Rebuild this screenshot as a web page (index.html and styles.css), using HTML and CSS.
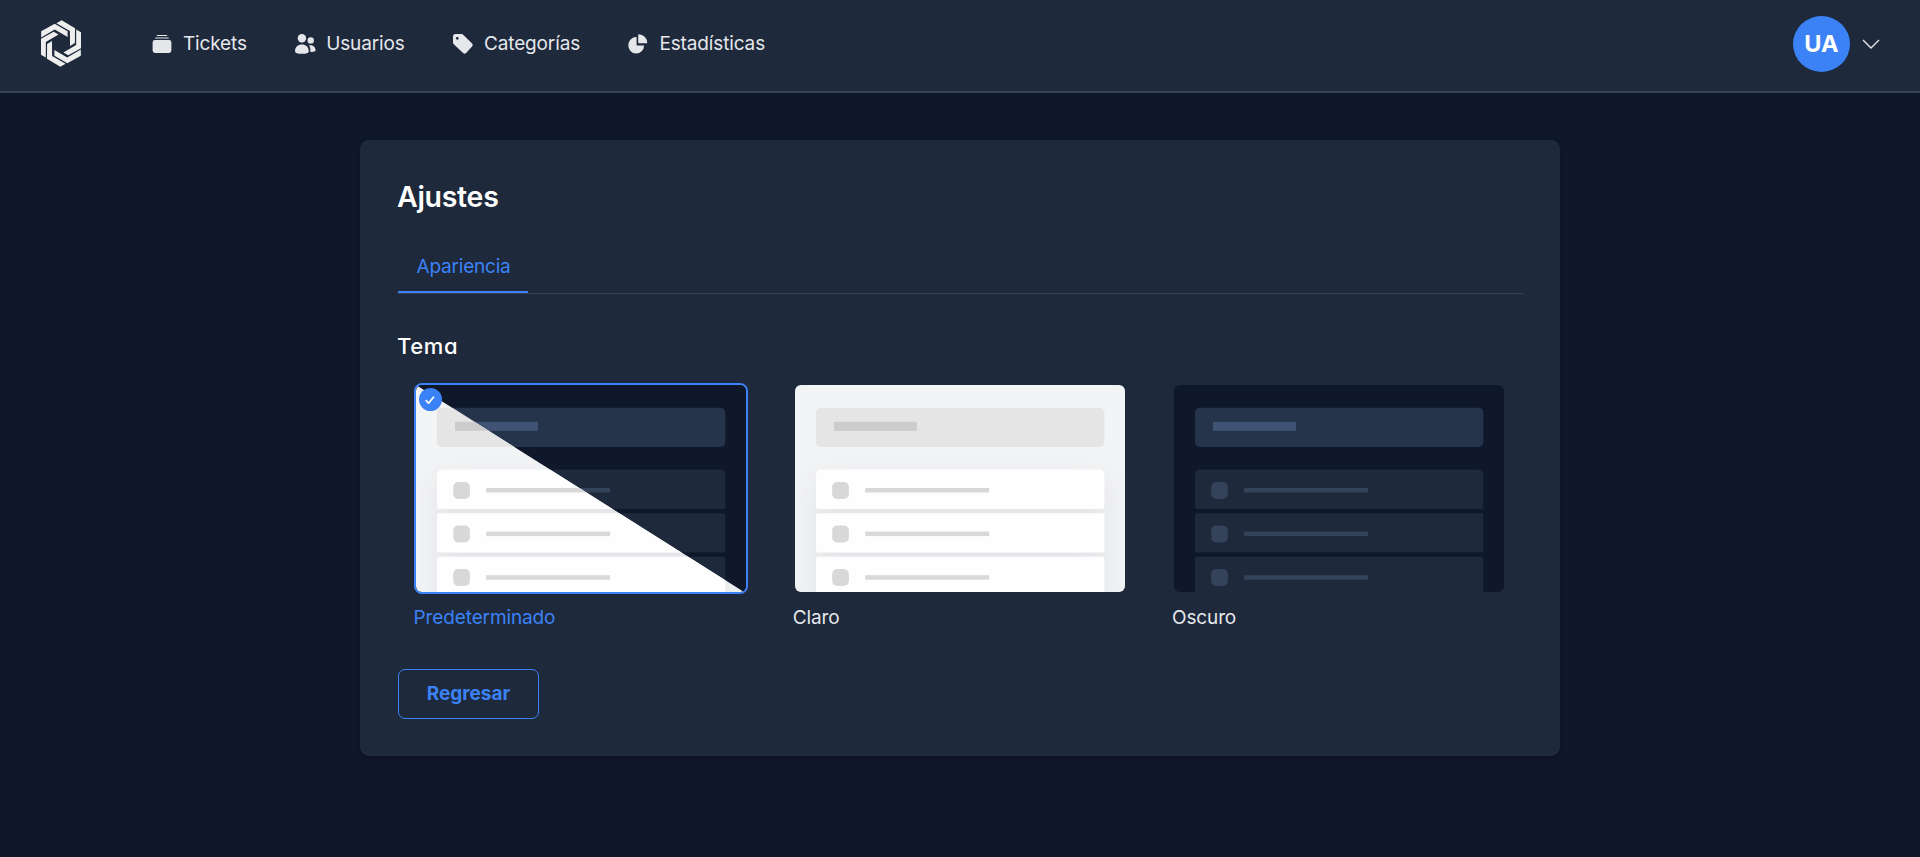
FILE: index.html
```html
<!DOCTYPE html>
<html lang="es">
<head>
<meta charset="utf-8">
<title>Ajustes</title>
<link rel="stylesheet" href="styles.css">
</head>
<body>
<svg class="defs" aria-hidden="true">
  <defs>
    <g id="preview">
      <rect class="p-bg" width="330.1" height="207"/>
      <rect class="p-shadow" x="18" y="92" width="295" height="140"/>
      <rect class="p-head" x="21" y="22.7" width="288.5" height="39.3" rx="5"/>
      <rect class="p-title" x="39" y="36.8" width="83" height="9"/>
      <path class="p-row" d="M26 84.6h278.500a5 5 0 0 1 5 5V122a2 2 0 0 1-2 2H23a2 2 0 0 1-2-2V89.600a5 5 0 0 1 5-5z"/>
      <rect class="p-row" x="21" y="128.300" width="288.500" height="39.300" rx="2"/>
      <rect class="p-row" x="21" y="171.800" width="288.500" height="45" rx="2"/>
      <g class="p-item">
        <rect x="37.200" y="97" width="16.700" height="17" rx="5"/><rect x="70.200" y="103" width="124" height="4.500"/>
        <rect x="37.200" y="140.500" width="16.700" height="17" rx="5"/><rect x="70.200" y="146.600" width="124" height="4.500"/>
        <rect x="37.200" y="184" width="16.700" height="17" rx="5"/><rect x="70.200" y="190.200" width="124" height="4.500"/>
      </g>
    </g>
    <clipPath id="lower"><path d="M0 0L328 207H0z"/></clipPath>
    <filter id="soft" x="-20%" y="-40%" width="140%" height="180%"><feGaussianBlur stdDeviation="14"/></filter>
    <path id="blade" d="M-60-37L-19-60L20-37V-20L-19-42L-60-18.500z"/>
  </defs>
</svg>

<header class="nav">
  <svg class="logo" viewBox="-60.500 -71 121 142">
    <use href="#blade"/><use href="#blade" transform="rotate(60)"/><use href="#blade" transform="rotate(120)"/>
    <use href="#blade" transform="rotate(180)"/><use href="#blade" transform="rotate(240)"/><use href="#blade" transform="rotate(300)"/>
  </svg>
  <nav class="links">
    <a class="link"><svg class="icon" viewBox="0 0 20 20"><path d="M5.500 1h9q.8 0 .9 1H4.600q.1-1 .9-1zM4.300 3.400h11.400q1.300 0 1.500 1.100H2.800q.2-1.100 1.500-1.100zM3 6h14q2.400 0 2.400 2.400v8.200q0 2.400-2.400 2.400H3Q.6 19 .6 16.600V8.400Q.6 6 3 6z"/></svg>Tickets</a>
    <a class="link"><svg class="icon" viewBox="0 0 20 20"><circle cx="6.900" cy="4.200" r="4.200"/><circle cx="15.700" cy="6.400" r="3.200"/><path d="M0 17.200C0 13.300 3 10.600 6.900 10.600s6.900 2.700 6.900 6.600Q13.500 19.800 6.900 19.800T0 17.200zM14 11.300c3.700-.8 6.600 1.500 6.600 5.400q-1.500 1.500-5.300 1.400c.3-2.800 0-4.800-1.300-6.800z"/></svg>Usuarios</a>
    <a class="link"><svg class="icon" viewBox="0 0 20 20"><path fill-rule="evenodd" d="M2.500 0h6q1 0 1.700.7l8.900 8.900q1.400 1.500 0 3l-6 6.300q-1.500 1.500-3 0L.8 10.300Q0 9.500 0 8.500v-6Q0 0 2.500 0zM4.300 2.900a1.400 1.400 0 1 0 0 2.800 1.400 1.400 0 0 0 0-2.800z"/></svg>Categorías</a>
    <a class="link"><svg class="icon" viewBox="0 0 20 20"><path d="M8.600 3.100v7.800q0 .5.500.5h7A7.900 8.200 0 1 1 8.600 3.100zM10.600.2a8.600 8.600 0 0 1 8.600 8.600q0 .5-.5.500h-7.600q-.9 0-.9-.8V.6q0-.4.400-.4z"/></svg>Estadísticas</a>
  </nav>
  <div class="account">
    <span class="avatar">UA</span>
    <svg class="chevron" viewBox="0 0 18 10"><path d="M1 1l8 8 8-8"/></svg>
  </div>
</header>

<main class="card">
  <h1 class="title">Ajustes</h1>
  <div class="tabs"><a class="tab">Apariencia</a></div>
  <h2 class="section">Tema</h2>
  <div class="themes">
    <div class="theme selected">
      <div class="frame">
        <svg class="shot" viewBox="0 0 330.100 207" preserveAspectRatio="none">
          <use href="#preview" class="dark"/>
          <g clip-path="url(#lower)"><use href="#preview" class="light"/></g>
        </svg>
        <span class="badge"><svg class="check" viewBox="0 0 10 10"><path d="M1.200 5.600l2.400 2.600L8.400 2.200"/></svg></span>
      </div>
      <span class="label">Predeterminado</span>
    </div>
    <div class="theme">
      <div class="frame"><svg class="shot" viewBox="0 0 330.100 207" preserveAspectRatio="none"><use href="#preview" class="light"/></svg></div>
      <span class="label">Claro</span>
    </div>
    <div class="theme">
      <div class="frame"><svg class="shot" viewBox="0 0 330.100 207" preserveAspectRatio="none"><use href="#preview" class="dark"/></svg></div>
      <span class="label">Oscuro</span>
    </div>
  </div>
  <button class="back">Regresar</button>
</main>
</body>
</html>
```
FILE: styles.css
```css
* { box-sizing: border-box; }
html { font-size: 15.2px; }
body {
  margin: 0;
  min-height: 857px;
  background: #0f172a;
  color: #e5e7eb;
  font-family: Inter, sans-serif;
}
.defs { position: absolute; width: 0; height: 0; }

.nav {
  display: flex;
  align-items: center;
  height: 93px;
  padding: 0 40px 3px 41px;
  background: #1e293b;
  border-bottom: 2px solid #374151;
}
.logo { width: 40px; height: 47px; margin-bottom: 1px; fill: #eee; }
.links { display: flex; gap: 48px; margin-left: 70.500px; }
.link { display: flex; align-items: center; font-size: 19px; line-height: 28px; letter-spacing: -.14px; }
.icon { width: 20px; height: 20px; margin: 0 11.400px 1px 0; fill: #e5e7eb; overflow: visible; }
.account { display: flex; align-items: center; gap: 12px; margin-left: auto; }
.avatar {
  display: flex;
  align-items: center;
  justify-content: center;
  width: 57px;
  height: 56px;
  padding-bottom: 1px;
  border-radius: 50%;
  background: #3b82f6;
  color: #fff;
  font-size: 23.500px;
  font-weight: 700;
}
.chevron { width: 18px; height: 10px; fill: none; stroke: #e5e7eb; stroke-width: 1.4; }

.card {
  width: 1200px;
  height: 616px;
  margin: 47px auto 0;
  padding: 38px 37px 38px 38px;
  border-radius: 9px;
  background: #1e293b;
  box-shadow: 0 3px 6px rgba(0, 0, 0, .2);
}
.title, .section { margin: 0; color: #fff; font-feature-settings: "cv11"; }
.title { margin-left: -1px; font-size: 28.500px; line-height: 38px; font-weight: 600; letter-spacing: -.3px; }
.tabs { display: flex; height: 55px; margin-top: 23px; border-bottom: 1px solid #374151; }
.tab {
  width: 130px;
  height: 54px;
  padding: 16px 0 0 18.500px;
  border-bottom: 2px solid #3b82f6;
  color: #3b82f6;
  font-size: 19px;
  line-height: 24px;
  letter-spacing: -.2px;
}
.section { margin: 37px 0 0 -1px; font-size: 22px; line-height: 30px; font-weight: 450; letter-spacing: .6px; }
.themes { display: grid; grid-template-columns: repeat(3, 334px); gap: 45.200px; margin-top: 22px; padding-left: 15.600px; }
.frame { position: relative; height: 211px; border: 2px solid transparent; border-radius: 8px; }
.selected .frame { border-color: #3b82f6; }
.shot { display: block; width: 100%; height: 207px; border-radius: 6px; }
.badge {
  position: absolute;
  top: 3px;
  left: 3px;
  display: flex;
  align-items: center;
  justify-content: center;
  width: 23px;
  height: 23px;
  border-radius: 50%;
  background: #3b82f6;
}
.check { width: 10px; height: 10px; fill: none; stroke: #fff; stroke-width: 1.700; stroke-linecap: round; stroke-linejoin: round; }
.label { display: block; margin-top: 10px; font-size: 19px; line-height: 28px; letter-spacing: -.12px; }
.selected .label { color: #3b82f6; }
.back {
  display: block;
  width: 141px;
  height: 50px;
  margin-top: 37px;
  border: 1px solid #3b82f6;
  border-radius: 7px;
  background: none;
  color: #3b82f6;
  font: 700 19px/24px Inter, sans-serif;
}

.light { --bg: #f3f4f6; --shade: #e5e6e9; --head: #e5e5e5; --bar: #cdcbcc; --row: #fefefe; --item: #d8d8d8; }
.dark { --bg: #0f172a; --shade: none; --head: #26344b; --bar: #415374; --row: #1e293b; --item: #35435a; }
.p-bg { fill: var(--bg); }
.p-shadow { fill: var(--shade); filter: url(#soft); }
.p-head { fill: var(--head); }
.p-title { fill: var(--bar); }
.p-row { fill: var(--row); }
.p-item { fill: var(--item); }
```
